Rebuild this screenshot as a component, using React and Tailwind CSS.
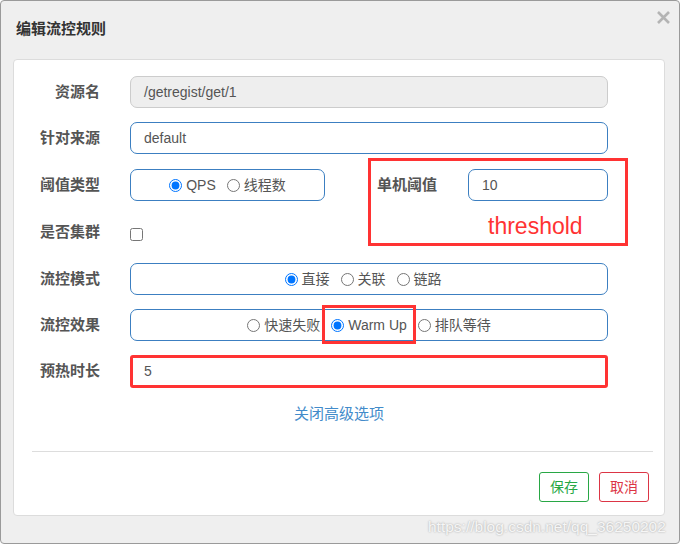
import React from 'react';

const font = { fontFamily: '"Liberation Sans", "Noto Sans CJK SC", sans-serif' };

const Radio = ({ checked, label }) => (
  <label className="flex items-center gap-[4px]">
    <input type="radio" checked={checked} readOnly className="m-0 w-[13px] h-[13px] accent-[#0075ff]" />
    <span>{label}</span>
  </label>
);

const Row = ({ label, children, className = '' }) => (
  <div className={`flex items-center h-[32px] ${className}`}>
    <div className="w-[86px] text-right text-[15px] font-bold text-[#555] shrink-0">{label}</div>
    <div className="ml-[30px] flex items-center w-[478px] h-full">{children}</div>
  </div>
);

const App = () => {
  return (
    <div className="w-[680px] h-[544px] bg-[#efefef] border border-[#9a9a9a] rounded-[4px] flex flex-col text-[#333]" style={font}>
      {/* 标题 */}
      <div className="h-[58px] flex justify-between items-start pl-[15px] pr-[9px]">
        <div className="mt-[17px] text-[15px] font-bold text-[#333]">编辑流控规则</div>
        <svg width="13" height="13" viewBox="0 0 13 13" className="mt-[10px]">
          <path d="M1 1 L12 12 M12 1 L1 12" stroke="#b4b4b4" strokeWidth="2.6" />
        </svg>
      </div>

      {/* 表单 */}
      <div className="relative ml-[12px] w-[652px] h-[457px] bg-white border border-[#dcdcdc] rounded-[4px] pt-[16px]">
        <Row label="资源名">
          <div className="w-full h-full bg-[#eeeeee] border border-[#cccccc] rounded-[7px] flex items-center pl-[13px] text-[14px] text-[#555]">
            /getregist/get/1
          </div>
        </Row>
        <Row label="针对来源" className="mt-[14px]">
          <div className="w-full h-full border border-[#3c7fc1] rounded-[7px] flex items-center pl-[13px] text-[14px] text-[#555]">
            default
          </div>
        </Row>
        <Row label="阈值类型" className="mt-[15px]">
          <div className="w-[195px] h-full border border-[#3c7fc1] rounded-[7px] flex items-center justify-center gap-[11px] text-[14px] text-[#555]">
            <Radio checked label="QPS" />
            <Radio label="线程数" />
          </div>
          <div className="ml-[52px] w-[60px] text-[15px] font-bold text-[#555] shrink-0">单机阈值</div>
          <div className="ml-[31px] w-[140px] h-full border border-[#3c7fc1] rounded-[7px] flex items-center pl-[13px] text-[14px] text-[#555]">
            10
          </div>
        </Row>
        <Row label="是否集群" className="mt-[15px]">
          <input type="checkbox" readOnly className="m-0 w-[13px] h-[13px] mt-[5px]" />
        </Row>
        <Row label="流控模式" className="mt-[15px]">
          <div className="w-full h-full border border-[#3c7fc1] rounded-[7px] flex items-center justify-center gap-[11px] text-[14px] text-[#555] pr-[12px]">
            <Radio checked label="直接" />
            <Radio label="关联" />
            <Radio label="链路" />
          </div>
        </Row>
        <Row label="流控效果" className="mt-[14px]">
          <div className="w-full h-full border border-[#3c7fc1] rounded-[7px] flex items-center justify-center gap-[11px] text-[14px] text-[#555]">
            <Radio label="快速失败" />
            <Radio checked label="Warm Up" />
            <Radio label="排队等待" />
          </div>
        </Row>
        <Row label="预热时长" className="mt-[14px] h-[33px]">
          <div className="w-full h-full border-[3px] border-[#f33] rounded-[3px] flex items-center pl-[11px] text-[14px] text-[#555]">
            5
          </div>
        </Row>

        <div className="mt-[16px] text-center text-[15px] leading-[20px] text-[#428bca]">关闭高级选项</div>

        <div className="mt-[27px] ml-[18px] mr-[11px] h-px bg-[#dddddd]" />

        <div className="mt-[20px] flex justify-end gap-[10px] pr-[15px]">
          <button className="w-[50px] h-[30px] border border-[#28a745] rounded-[3px] text-[14px] text-[#28a745] bg-white">保存</button>
          <button className="w-[50px] h-[30px] border border-[#dc3545] rounded-[3px] text-[14px] text-[#dc3545] bg-white">取消</button>
        </div>

        {/* 标注 */}
        <div className="absolute left-[354px] top-[98px] w-[260px] h-[88px] border-[3px] border-[#f33] flex items-end justify-start pl-[117px] pb-[2px]">
          <span className="text-[23px] leading-[30px] text-[#f33]">threshold</span>
        </div>
        <div className="absolute left-[308px] top-[245px] w-[94px] h-[39px] border-[3px] border-[#f33]" />
      </div>

      <div className="absolute left-[428px] top-[515px] text-[15.5px] text-[#f6f6f6] [text-shadow:0_0_2px_#9a9a9a]">
        https://blog.csdn.net/qq_36250202
      </div>
    </div>
  );
};

export default App;
